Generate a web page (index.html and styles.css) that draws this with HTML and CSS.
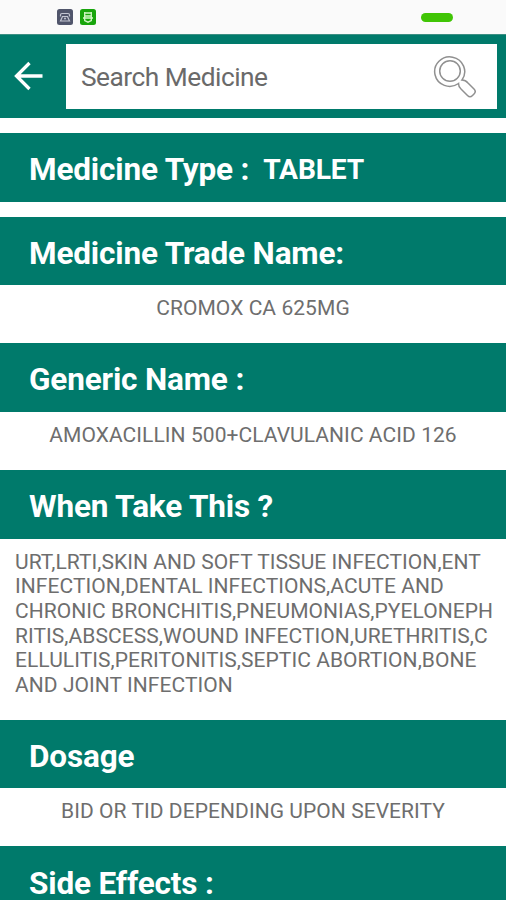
FILE: index.html
```html
<!DOCTYPE html>
<html lang="en">
<head>
<meta charset="utf-8">
<title>Medicine details</title>
<link rel="stylesheet" href="styles.css">
</head>
<body>
<div class="status">
  <svg class="status-icon" viewBox="0 0 16 16"><rect width="16" height="16" rx="2.5" fill="#50556b"/><path d="M3.500 7.500V6Q3.500 4.500 5 4.500h6Q12.500 4.500 12.500 6v1.500M5.500 7.500h5l2 4.500h-9z" fill="none" stroke="#c3c6d2" stroke-width="1.200"/><circle cx="8" cy="9.500" r="1" fill="#c3c6d2"/></svg>
  <svg class="status-icon" viewBox="0 0 16 16"><rect width="16" height="16" rx="2.5" fill="#18a50c"/><path d="M4.700 3v5.500M11.300 3v5.500M4.700 4h6.600M4.700 7h6.600M3 9h10M4.700 9v2.500l3.300 1.700l3.300-1.700V9" fill="none" stroke="#d4f7c8" stroke-width="1.300"/></svg>
  <span class="battery"></span>
</div>
<header class="toolbar">
  <svg class="back" viewBox="0 0 30 30"><path d="M28.500 15H3M15.500 2L2.500 15l13 13" fill="none" stroke="#fff" stroke-width="3.300"/></svg>
  <div class="search">
    <span class="hint">Search Medicine</span>
    <svg class="lens" viewBox="0 0 44 44" fill="none" stroke="#909090" stroke-width="1.500"><circle cx="17" cy="16" r="10.300"/><path d="M29 25A15 14.700 0 1 0 25.500 28.500Q25.500 32 28 34L34.500 40.500Q37 43 39.500 40.500L41 39Q43.500 36.500 41 34L35 28Q32.500 25 29 25Z"/></svg>
  </div>
</header>
<main>
  <h2 class="band type"><span>Medicine Type :</span><span class="value">TABLET</span></h2>
  <h2 class="band">Medicine Trade Name:</h2>
  <p class="detail">CROMOX CA 625MG</p>
  <h2 class="band">Generic Name :</h2>
  <p class="detail">AMOXACILLIN 500+CLAVULANIC ACID 126</p>
  <h2 class="band">When Take This ?</h2>
  <p class="detail long">URT,LRTI,SKIN AND SOFT TISSUE INFECTION,ENT<br>INFECTION,DENTAL INFECTIONS,ACUTE AND<br>CHRONIC BRONCHITIS,PNEUMONIAS,PYELONEPH<br>RITIS,ABSCESS,WOUND INFECTION,URETHRITIS,C<br>ELLULITIS,PERITONITIS,SEPTIC ABORTION,BONE<br>AND JOINT INFECTION</p>
  <h2 class="band">Dosage</h2>
  <p class="detail">BID OR TID DEPENDING UPON SEVERITY</p>
  <h2 class="band">Side Effects :</h2>
</main>
</body>
</html>
```
FILE: styles.css
```css
* { box-sizing: border-box; }
body {
  margin: 0;
  height: 900px;
  overflow: hidden;
  background: #fff;
  font-family: Roboto, sans-serif;
}
.status {
  display: flex;
  gap: 7px;
  height: 34px;
  padding: 9px 53px 0 57px;
  background: #fafafa;
}
.status-icon { width: 16px; height: 16px; }
.battery {
  width: 32px;
  height: 9px;
  margin: 4px 0 0 auto;
  border-radius: 4.5px;
  background: #40c505;
}
.toolbar {
  display: flex;
  height: 84px;
  padding: 10px 9px 9px 14px;
  background: #007a6b;
  border-top: 1px solid #3c8f83;
}
.back { width: 30px; height: 30px; margin-top: 16px; }
.search {
  display: flex;
  flex: 1;
  align-items: center;
  justify-content: space-between;
  height: 65px;
  margin: -1px 0 0 22px;
  padding: 0 20px 0 15px;
  background: #fff;
}
.hint {
  font-size: 26.300px;
  letter-spacing: -0.5px;
  color: #6a6a6a;
  white-space: nowrap;
}
.lens { width: 44px; height: 44px; }
.band {
  display: flex;
  align-items: center;
  height: 68.700px;
  margin: 0;
  padding: 4.500px 0 0 29px;
  background: #007a6b;
  color: #fff;
  font-size: 31.500px;
  letter-spacing: -0.16px;
  line-height: 37px;
  font-weight: 700;
  white-space: nowrap;
}
.type { margin: 15px 0; }
.value { margin-left: 14px; font-size: 28.200px; }
.detail {
  margin: 0;
  height: 58px;
  padding-top: 11px;
  color: #6e6e6e;
  font-size: 21px;
  letter-spacing: 0.06px;
  line-height: 24.600px;
  text-align: center;
  white-space: nowrap;
}
.long { height: 181px; padding-left: 15px; text-align: left; }
```
